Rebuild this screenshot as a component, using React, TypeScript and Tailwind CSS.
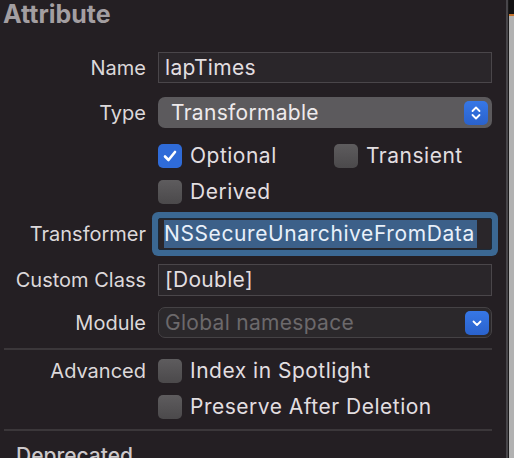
import React from "react";

const font = { fontFamily: "Inter, 'Noto Sans', sans-serif" };

function Label({ children }: { children?: React.ReactNode }) {
  return (
    <div className="w-[146px] shrink-0 text-right text-[20px] text-[#dcd8da]">
      {children}
    </div>
  );
}

function Checkbox({ checked = false }: { checked?: boolean }) {
  if (checked) {
    return (
      <div className="flex h-[24px] w-[24px] shrink-0 items-center justify-center rounded-[5px] bg-[#2f6bd8]">
        <svg width="16" height="16" viewBox="0 0 16 16">
          <path d="M3 8.5 L6.5 12 L13 4" fill="none" stroke="#ffffff" strokeWidth="2.6" strokeLinecap="round" strokeLinejoin="round" />
        </svg>
      </div>
    );
  }
  return <div className="h-[24px] w-[24px] shrink-0 rounded-[5px] bg-gradient-to-b from-[#5e5c5e] to-[#4b494b]" />;
}

function CheckRow({ label, checked }: { label: string; checked?: boolean }) {
  return (
    <div className="flex items-center gap-[8px]">
      <Checkbox checked={checked} />
      <span className="text-[21px] tracking-[0.5px] text-[#e2dee0]">{label}</span>
    </div>
  );
}

export default function App() {
  return (
    <div className="flex h-[458px] w-[514px] overflow-hidden bg-[#241f23]" style={font}>
      <div className="flex w-[506px] shrink-0 flex-col overflow-hidden">
        {/* Header */}
        <div className="h-[52px] shrink-0 pl-[3px] text-[25px] font-bold leading-[28px] text-[#a39ea1]">
          Attribute
        </div>

        {/* Name */}
        <div className="flex h-[31px] shrink-0 items-center gap-[12px]">
          <Label>Name</Label>
          <div className="flex h-[31px] w-[334px] items-center border border-[#4a464a] bg-[#2a262a] pl-[6px] text-[21px] tracking-[0.3px] text-[#e2dee0]">
            lapTimes
          </div>
        </div>

        {/* Type */}
        <div className="mt-[14px] flex h-[31px] shrink-0 items-center gap-[12px]">
          <Label>Type</Label>
          <div className="flex h-[31px] w-[334px] items-center justify-between rounded-[7px] bg-[#5c5a5d] pl-[13px] pr-[4px] text-[21px] tracking-[0.3px] text-[#eeeaec]">
            <span>Transformable</span>
            <div className="flex h-[24px] w-[24px] items-center justify-center rounded-[5px] bg-gradient-to-b from-[#3677e6] to-[#2a62cc]">
              <svg width="12" height="16" viewBox="0 0 12 16">
                <path d="M2.5 6 L6 2.5 L9.5 6 M2.5 10 L6 13.5 L9.5 10" fill="none" stroke="#ffffff" strokeWidth="1.8" strokeLinecap="round" strokeLinejoin="round" />
              </svg>
            </div>
          </div>
        </div>

        {/* Optional / Transient */}
        <div className="mt-[16px] flex h-[24px] shrink-0 items-center gap-[12px]">
          <Label />
          <div className="w-[164px]">
            <CheckRow label="Optional" checked />
          </div>
          <CheckRow label="Transient" />
        </div>

        {/* Derived */}
        <div className="mt-[12px] flex h-[24px] shrink-0 items-center gap-[12px]">
          <Label />
          <CheckRow label="Derived" />
        </div>

        {/* Transformer */}
        <div className="mt-[14px] flex h-[32px] shrink-0 items-center gap-[12px]">
          <Label>Transformer</Label>
          <div className="flex h-[32px] w-[334px] items-center rounded-[2px] border border-[#1d2a38] bg-[#2a262a] pl-[5px] text-[21px] tracking-[0.6px] text-[#e8f0fa] shadow-[0_0_0_6px_#3b6893]">
            <span className="bg-[#3c6089] pr-[2px] leading-[28px]">NSSecureUnarchiveFromData</span>
          </div>
        </div>

        {/* Custom Class */}
        <div className="mt-[14px] flex h-[32px] shrink-0 items-center gap-[12px]">
          <Label>Custom Class</Label>
          <div className="flex h-[32px] w-[334px] items-center border border-[#4a464a] bg-[#2a262a] pl-[6px] text-[21px] tracking-[0.3px] text-[#e2dee0]">
            [Double]
          </div>
        </div>

        {/* Module */}
        <div className="mt-[11px] flex h-[31px] shrink-0 items-center gap-[12px]">
          <Label>Module</Label>
          <div className="flex h-[31px] w-[334px] items-center justify-between rounded-[7px] border border-[#454245] bg-[#2b282b] pl-[6px] pr-[2px] text-[21px] tracking-[0.3px] text-[#6c696b]">
            <span>Global namespace</span>
            <div className="flex h-[24px] w-[24px] items-center justify-center rounded-[5px] bg-gradient-to-b from-[#3677e6] to-[#2a62cc]">
              <svg width="12" height="12" viewBox="0 0 12 12">
                <path d="M2.5 4.5 L6 8 L9.5 4.5" fill="none" stroke="#ffffff" strokeWidth="1.8" strokeLinecap="round" strokeLinejoin="round" />
              </svg>
            </div>
          </div>
        </div>

        <div className="ml-[4px] mt-[10px] h-[2px] w-[488px] shrink-0 bg-[#3b373a]" />

        {/* Advanced */}
        <div className="mt-[9px] flex h-[24px] shrink-0 items-center gap-[12px]">
          <Label>Advanced</Label>
          <CheckRow label="Index in Spotlight" />
        </div>
        <div className="mt-[12px] flex h-[24px] shrink-0 items-center gap-[12px]">
          <Label />
          <CheckRow label="Preserve After Deletion" />
        </div>

        <div className="ml-[4px] mt-[10px] h-[2px] w-[488px] shrink-0 bg-[#3b373a]" />

        <div className="shrink-0 pl-[16px] pt-[13px] text-[21px] font-medium leading-[24px] text-[#cdc9cb]">
          Deprecated
        </div>
      </div>

      {/* Right edge of window */}
      <div className="w-[2px] shrink-0 bg-[#48464a]" />
      <div className="w-[1px] shrink-0 bg-[#1b1a1b]" />
      <div className="flex flex-1 flex-col bg-[#b2b2b2]">
        <div className="h-[14px] bg-[#121112]" />
        <div className="h-[2px] bg-[#c5742e]" />
      </div>
    </div>
  );
}
